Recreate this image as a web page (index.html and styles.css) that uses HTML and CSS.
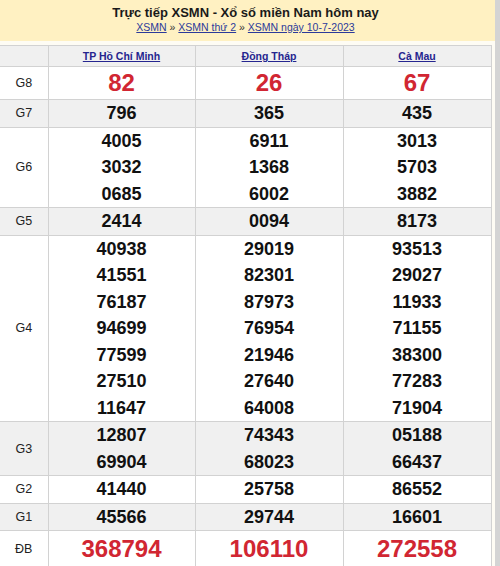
FILE: index.html
```html
<!DOCTYPE html>
<html lang="vi">
<head>
<meta charset="utf-8">
<link rel="stylesheet" href="styles.css">
</head>
<body>
<div class="page">
  <div class="box">
    <div class="head">
      <h2 class="title">Trực tiếp XSMN - Xổ số miền Nam hôm nay</h2>
      <div class="crumbs"><a href="#">XSMN</a> » <a href="#">XSMN thứ 2</a> » <a href="#">XSMN ngày 10-7-2023</a></div>
    </div>
    <table class="kq">
      <colgroup><col class="c0"><col class="c1"><col class="c2"><col class="c3"></colgroup>
      <tr class="hd alt"><th></th><th><a href="#">TP Hồ Chí Minh</a></th><th><a href="#">Đồng Tháp</a></th><th><a href="#">Cà Mau</a></th></tr>
      <tr class="g8"><td class="lb">G8</td><td class="big">82</td><td class="big">26</td><td class="big">67</td></tr>
      <tr class="alt"><td class="lb">G7</td><td><div>796</div></td><td><div>365</div></td><td><div>435</div></td></tr>
      <tr><td class="lb">G6</td><td><div>4005</div><div>3032</div><div>0685</div></td><td><div>6911</div><div>1368</div><div>6002</div></td><td><div>3013</div><div>5703</div><div>3882</div></td></tr>
      <tr class="alt"><td class="lb">G5</td><td><div>2414</div></td><td><div>0094</div></td><td><div>8173</div></td></tr>
      <tr><td class="lb">G4</td>
        <td><div>40938</div><div>41551</div><div>76187</div><div>94699</div><div>77599</div><div>27510</div><div>11647</div></td>
        <td><div>29019</div><div>82301</div><div>87973</div><div>76954</div><div>21946</div><div>27640</div><div>64008</div></td>
        <td><div>93513</div><div>29027</div><div>11933</div><div>71155</div><div>38300</div><div>77283</div><div>71904</div></td></tr>
      <tr class="alt"><td class="lb">G3</td><td><div>12807</div><div>69904</div></td><td><div>74343</div><div>68023</div></td><td><div>05188</div><div>66437</div></td></tr>
      <tr><td class="lb">G2</td><td><div>41440</div></td><td><div>25758</div></td><td><div>86552</div></td></tr>
      <tr class="alt"><td class="lb">G1</td><td><div>45566</div></td><td><div>29744</div></td><td><div>16601</div></td></tr>
      <tr class="db"><td class="lb">ĐB</td><td class="big">368794</td><td class="big">106110</td><td class="big">272558</td></tr>
    </table>
    <div class="foot"></div>
  </div>
</div>
</body>
</html>
```
FILE: styles.css
```css
html, body { margin: 0; padding: 0; }
body {
  background: #d4d4d4;
  font-family: "Liberation Sans", Arial, sans-serif;
  color: #111;
}
.page { width: 495px; height: 566px; background: #fefcf4; overflow: hidden; }
.box { width: 495px; }
.head {
  background: #fff1c2;
  height: 41px;
  text-align: center;
  width: 491px;
  box-sizing: border-box;
  box-shadow: 4px 0 0 #fff1c2;
}
.title {
  margin: 0;
  padding-top: 5px;
  font-size: 13px;
  line-height: 16px;
  font-weight: bold;
  color: #1a1a1a;
}
.crumbs {
  font-size: 10.5px;
  line-height: 13px;
  color: #333;
}
.crumbs a { color: #2c3a9a; }
.kq {
  margin-top: 4px;
  width: 491px;
  border-collapse: collapse;
  table-layout: fixed;
  background: #fff;
}
.c0 { width: 48px; }
.c1 { width: 147px; }
.c2 { width: 148px; }
.c3 { width: 148px; }
.kq th, .kq td {
  border: 1px solid #d2d2d2;
  padding: 0;
  text-align: center;
  vertical-align: middle;
}
.kq tr > :first-child { border-left: 0; }
.kq tr.alt { background: #f0f0f0; }
.hd th {
  height: 20px;
  font-size: 10.5px;
  font-weight: bold;
}
.hd th a { color: #25258f; }
.kq td div {
  font-size: 18px;
  font-weight: bold;
  line-height: 26.5px;
  color: #111;
}
.kq td.lb {
  font-size: 12.5px;
  color: #222;
}
.kq td.big {
  font-size: 24px;
  font-weight: bold;
  color: #d12632;
}
.g8 td { height: 32px; }
.db td { height: 35px; }
.foot { width: 492px; height: 2px; background: #e4a66e; }
```
